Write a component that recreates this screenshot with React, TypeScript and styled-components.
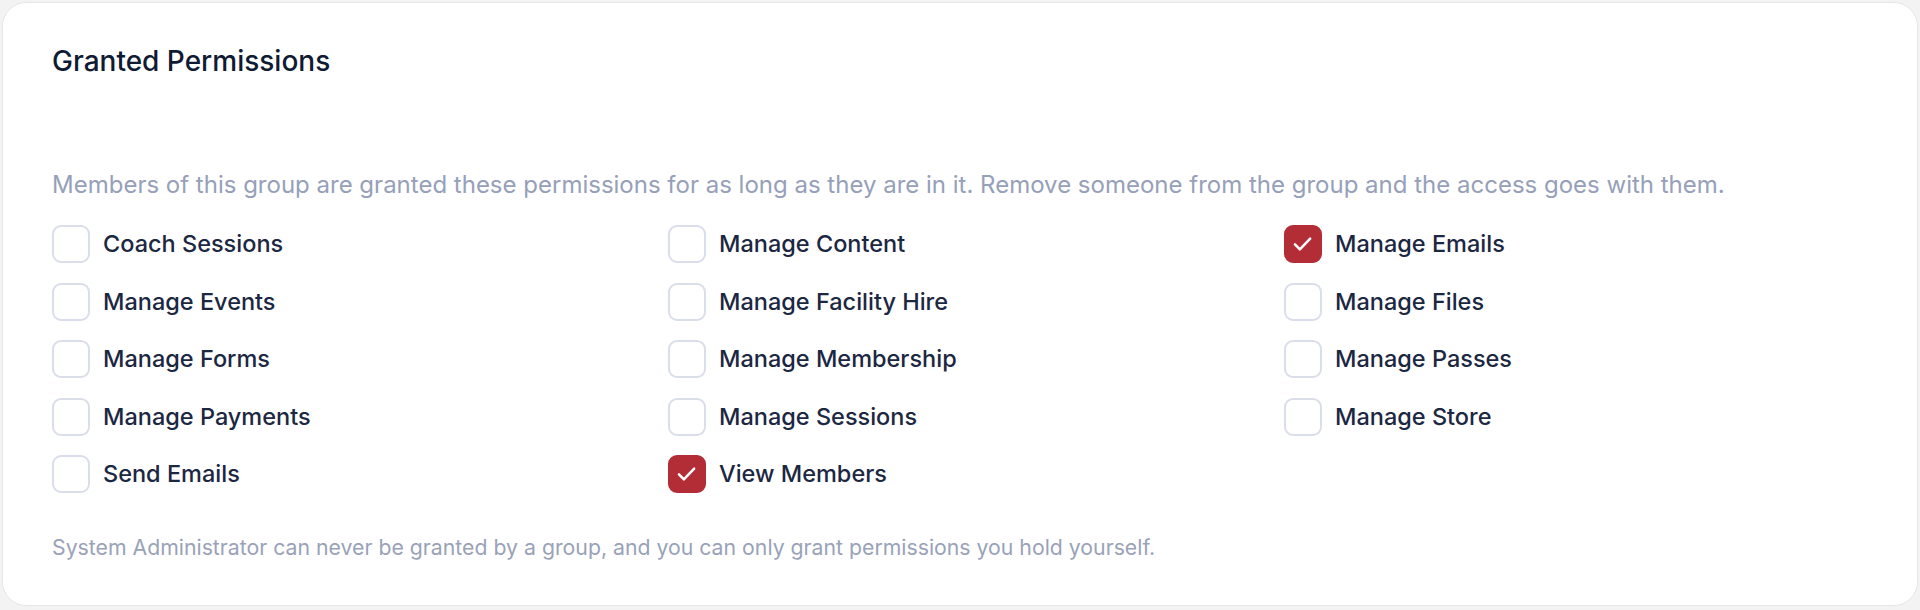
import styled, { createGlobalStyle } from "styled-components";

const GlobalStyle = createGlobalStyle`
  html, body {
    margin: 0;
    padding: 0;
    background: #f3f3f4;
    font-family: Inter, "Noto Sans", "Liberation Sans", sans-serif;
  }
`;

const Page = styled.div`
  padding: 2px;
  min-height: 606px;
`;

const Card = styled.section`
  background: #ffffff;
  border: 1px solid #e6e7ea;
  border-radius: 24px;
  padding: 40px 49px 44px 49px;
  display: flex;
  flex-direction: column;
`;

const Heading = styled.h2`
  margin: 0;
  font-size: 28px;
  line-height: 36px;
  font-weight: 500;
  color: #0f1a33;
`;

const Description = styled.p`
  margin: 90px 0 0;
  font-size: 24px;
  line-height: 32px;
  color: #96a0b9;
`;

const Grid = styled.div`
  margin-top: 24px;
  display: grid;
  grid-template-columns: repeat(3, 1fr);
  column-gap: 32px;
  row-gap: 19.5px;
`;

const Option = styled.label`
  display: flex;
  align-items: center;
  gap: 13px;
  cursor: pointer;
`;

const Box = styled.span<{ $checked: boolean }>`
  flex: none;
  width: 38px;
  height: 38px;
  box-sizing: border-box;
  border-radius: 9px;
  border: 2px solid ${(p) => (p.$checked ? "#b32d37" : "#dadeea")};
  background: ${(p) => (p.$checked ? "#b32d37" : "#ffffff")};
  display: flex;
  align-items: center;
  justify-content: center;
`;

const Label = styled.span`
  font-size: 23.5px;
  line-height: 38px;
  font-weight: 450;
  color: #1c2742;
`;

const Footnote = styled.p`
  margin: 40px 0 0;
  font-size: 21.25px;
  line-height: 28px;
  color: #99a2b8;
`;

const permissions: { name: string; checked?: boolean }[] = [
  { name: "Coach Sessions" },
  { name: "Manage Content" },
  { name: "Manage Emails", checked: true },
  { name: "Manage Events" },
  { name: "Manage Facility Hire" },
  { name: "Manage Files" },
  { name: "Manage Forms" },
  { name: "Manage Membership" },
  { name: "Manage Passes" },
  { name: "Manage Payments" },
  { name: "Manage Sessions" },
  { name: "Manage Store" },
  { name: "Send Emails" },
  { name: "View Members", checked: true },
];

function Tick() {
  return (
    <svg width="38" height="38" viewBox="0 0 38 38" fill="none">
      <path
        d="M10 19.5 L15.5 25 L27 13"
        stroke="#ffffff"
        strokeWidth="2.8"
        strokeLinecap="round"
        strokeLinejoin="round"
      />
    </svg>
  );
}

export default function App() {
  return (
    <Page>
      <GlobalStyle />
      <Card>
        <Heading>Granted Permissions</Heading>
        <Description>
          Members of this group are granted these permissions for as long as they are in it. Remove
          someone from the group and the access goes with them.
        </Description>
        <Grid>
          {permissions.map((p) => (
            <Option key={p.name}>
              <Box $checked={!!p.checked}>{p.checked && <Tick />}</Box>
              <Label>{p.name}</Label>
            </Option>
          ))}
        </Grid>
        <Footnote>
          System Administrator can never be granted by a group, and you can only grant permissions you
          hold yourself.
        </Footnote>
      </Card>
    </Page>
  );
}
